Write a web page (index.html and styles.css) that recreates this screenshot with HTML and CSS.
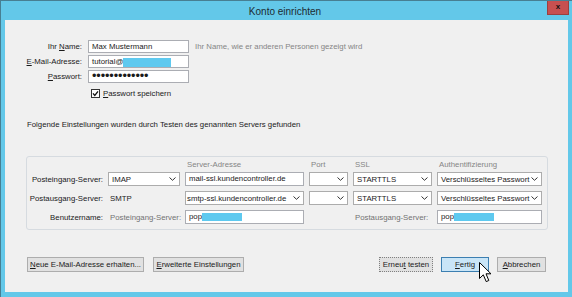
FILE: index.html
```html
<!DOCTYPE html>
<html lang="de">
<head>
  <meta charset="UTF-8">
  <title>Konto einrichten</title>
  <link rel="stylesheet" href="styles.css">
</head>
<body>
  <div class="window">
    <div class="titlebar">
      <span class="title">Konto einrichten</span>
      <span class="close">x</span>
    </div>

    <div class="content">
      <!-- Identity -->
      <div class="identity">
        <span class="label">Ihr <u>N</u>ame:</span>
        <div class="field">Max Mustermann</div>
        <span class="hint">Ihr Name, wie er anderen Personen gezeigt wird</span>

        <span class="label"><u>E</u>-Mail-Adresse:</span>
        <div class="field">tutorial@<span class="redact redact-mail"></span></div>
        <span></span>

        <span class="label"><u>P</u>asswort:</span>
        <div class="field"><span class="dots">&bull;&bull;&bull;&bull;&bull;&bull;&bull;&bull;&bull;&bull;&bull;&bull;&bull;</span></div>
        <span></span>

        <div class="remember">
          <svg class="checkbox" width="9" height="9" viewBox="0 0 9 9">
            <rect x="0.5" y="0.5" width="8" height="8" fill="#fff" stroke="#333"/>
            <polyline points="2,4.3 3.8,6.4 7,2.3" fill="none" stroke="#111" stroke-width="1.3"/>
          </svg>
          <span><u>P</u>asswort speichern</span>
        </div>
      </div>

      <p class="found">Folgende Einstellungen wurden durch Testen des genannten Servers gefunden</p>

      <!-- Server settings -->
      <div class="group">
        <div class="servers">
          <span></span>
          <span></span>
          <span class="head">Server-Adresse</span>
          <span class="head">Port</span>
          <span class="head">SSL</span>
          <span class="head">Authentifizierung</span>

          <span class="label">Posteingang-Server:</span>
          <div class="select"><span>IMAP</span><svg class="chev" width="7" height="4" viewBox="0 0 7 4"><polyline points="0.5,0.5 3.5,3.3 6.5,0.5" fill="none" stroke="#333"/></svg></div>
          <div class="field">mail-ssl.kundencontroller.de</div>
          <div class="select"><span></span><svg class="chev" width="7" height="4" viewBox="0 0 7 4"><polyline points="0.5,0.5 3.5,3.3 6.5,0.5" fill="none" stroke="#333"/></svg></div>
          <div class="select"><span>STARTTLS</span><svg class="chev" width="7" height="4" viewBox="0 0 7 4"><polyline points="0.5,0.5 3.5,3.3 6.5,0.5" fill="none" stroke="#333"/></svg></div>
          <div class="select"><span>Verschlüsseltes Passwort</span><svg class="chev" width="7" height="4" viewBox="0 0 7 4"><polyline points="0.5,0.5 3.5,3.3 6.5,0.5" fill="none" stroke="#333"/></svg></div>

          <span class="label">Postausgang-Server:</span>
          <span class="plain">SMTP</span>
          <div class="select select-tight"><span>smtp-ssl.kundencontroller.de</span><svg class="chev" width="7" height="4" viewBox="0 0 7 4"><polyline points="0.5,0.5 3.5,3.3 6.5,0.5" fill="none" stroke="#333"/></svg></div>
          <div class="select"><span></span><svg class="chev" width="7" height="4" viewBox="0 0 7 4"><polyline points="0.5,0.5 3.5,3.3 6.5,0.5" fill="none" stroke="#333"/></svg></div>
          <div class="select"><span>STARTTLS</span><svg class="chev" width="7" height="4" viewBox="0 0 7 4"><polyline points="0.5,0.5 3.5,3.3 6.5,0.5" fill="none" stroke="#333"/></svg></div>
          <div class="select"><span>Verschlüsseltes Passwort</span><svg class="chev" width="7" height="4" viewBox="0 0 7 4"><polyline points="0.5,0.5 3.5,3.3 6.5,0.5" fill="none" stroke="#333"/></svg></div>

          <span class="label">Benutzername:</span>
          <span class="muted">Posteingang-Server:</span>
          <div class="field">pop<span class="redact redact-user"></span></div>
          <span></span>
          <span class="muted">Postausgang-Server:</span>
          <div class="field">pop<span class="redact redact-user"></span></div>
        </div>
      </div>

      <!-- Buttons -->
      <div class="actions">
        <button class="btn btn-new"><u>N</u>eue E-Mail-Adresse erhalten...</button>
        <button class="btn btn-advanced"><u>E</u>rweiterte Einstellungen</button>
        <span class="spacer"></span>
        <button class="btn btn-retest">Erneu<u>t</u> testen</button>
        <button class="btn btn-done"><u>F</u>ertig</button>
        <button class="btn btn-cancel"><u>A</u>bbrechen</button>
      </div>
    </div>

    <svg class="cursor" width="13" height="21" viewBox="0 0 13 21">
      <path d="M0.5,0.5 L0.5,16.5 L4.3,12.8 L7.2,19.6 L9.8,18.5 L7,11.8 L12,11.8 Z" fill="#fff" stroke="#000" stroke-linejoin="round"/>
    </svg>
  </div>
</body>
</html>
```

FILE: styles.css
```css
/* Base */
* {
  box-sizing: border-box;
}

body {
  margin: 0;
  font-family: "Liberation Sans", Arial, sans-serif;
  font-size: 7.8px;
  color: #1a1a1a;
}

.window {
  position: relative;
  width: 572px;
  height: 297px;
  background: #63c8e9;
  border-top: 1px solid #477f93;
  border-left: 1px solid #477f93;
  overflow: hidden;
}

/* Title bar */
.titlebar {
  height: 19px;
  display: grid;
  grid-template-columns: 1fr auto 1fr;
  align-items: center;
  padding-right: 3px;
}

.title {
  grid-column: 2;
  font-size: 10px;
  color: #1d2b31;
  padding-top: 1px;
}

.close {
  grid-column: 3;
  justify-self: end;
  align-self: start;
  width: 22px;
  height: 14px;
  background: #c75050;
  border: 1px solid #9b4040;
  border-top: none;
  text-align: center;
  font-weight: bold;
  font-size: 8px;
  line-height: 12px;
  color: #111;
}

/* Content */
.content {
  margin: 0 4px;
  height: 272px;
  background: #f0f0f0;
  padding-top: 20px;
}

.identity {
  display: grid;
  grid-template-columns: 77px 101px auto;
  grid-auto-rows: 13px;
  column-gap: 6px;
  row-gap: 2px;
  align-items: center;
}

.label {
  text-align: right;
  white-space: nowrap;
}

.field {
  height: 13px;
  background: #fff;
  border: 1px solid #abadb3;
  padding: 0 3px;
  line-height: 11px;
  white-space: nowrap;
  overflow: hidden;
}

.hint {
  color: #858585;
  white-space: nowrap;
}

.dots {
  font-size: 12.7px;
  line-height: 11px;
  letter-spacing: -0.1px;
}

.redact {
  display: inline-block;
  background: #5ec9ef;
  vertical-align: top;
}

.redact-mail {
  width: 48px;
  height: 9px;
  margin-top: 2px;
}

.redact-user {
  width: 40px;
  height: 8px;
  margin-top: 2px;
}

.remember {
  grid-column: 2 / span 2;
  display: flex;
  align-items: center;
  gap: 3px;
  margin-top: 4px;
  padding-left: 3px;
}

.checkbox {
  display: block;
}

.found {
  margin: 21px 0 0 22px;
  line-height: 11px;
}

/* Server group */
.group {
  margin: 26px 0 0 21px;
  width: 522px;
  border: 1px solid #d6dbe0;
  border-radius: 3px;
  padding: 0 4px 5px 0;
}

.servers {
  display: grid;
  grid-template-columns: 76px 72px 119px 39px 79px 105px;
  grid-template-rows: 10px 14px 14px 14px;
  column-gap: 5px;
  row-gap: 5px;
  align-items: center;
}

.head {
  color: #858585;
  padding-left: 2px;
  line-height: 10px;
  align-self: end;
  margin-bottom: -3px;
}

.select {
  height: 14px;
  background: #fff;
  border: 1px solid #acacac;
  display: flex;
  align-items: center;
  justify-content: space-between;
  padding: 0 3px 0 3px;
  white-space: nowrap;
  overflow: hidden;
}

.select-tight {
  padding-left: 1px;
}

.servers .field {
  height: 14px;
  line-height: 12px;
}

.plain {
  padding-left: 2px;
}

.muted {
  color: #727272;
  padding-left: 2px;
  white-space: nowrap;
}

/* Buttons */
.actions {
  display: flex;
  gap: 8px;
  margin: 27px 22px 0 22px;
}

.spacer {
  flex: 1;
}

.btn {
  height: 15px;
  padding: 0;
  background: #e1e1e1;
  border: 1px solid #adadad;
  font-family: inherit;
  font-size: 7.8px;
  color: #1a1a1a;
  line-height: 13px;
  white-space: nowrap;
}

.btn-new {
  width: 117px;
}

.btn-advanced {
  width: 91px;
  margin-left: 1px;
}

.btn-retest {
  width: 54px;
  border: 1px dotted #808080;
}

.btn-done {
  width: 48px;
  background: #c9e5f7;
  border-color: #3c7fb1;
}

.btn-cancel {
  width: 49px;
}

.cursor {
  position: absolute;
  left: 478px;
  top: 261px;
}
```
